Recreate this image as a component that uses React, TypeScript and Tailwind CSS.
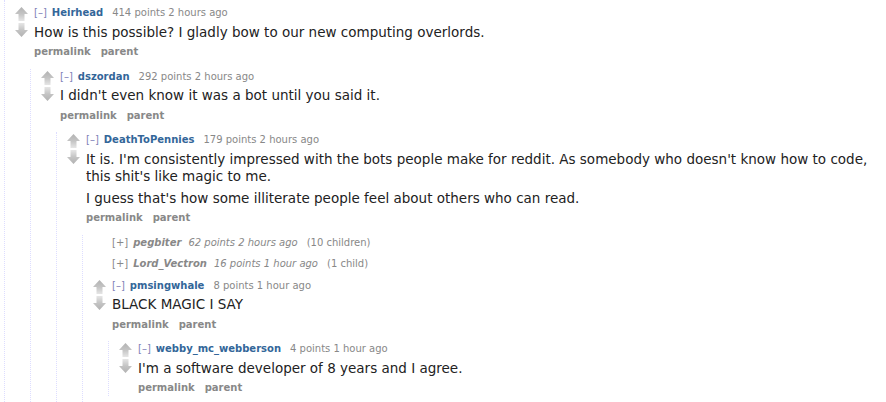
import React from "react";

const FONT = { fontFamily: '"DejaVu Sans", Verdana, sans-serif' };

function UpArrow() {
  return (
    <svg width="13" height="14" viewBox="0 0 13 14" className="block">
      <defs>
        <linearGradient id="ug" x1="0" y1="0" x2="0" y2="1">
          <stop offset="0" stopColor="#b2b2b2" />
          <stop offset="0.5" stopColor="#c4c4c4" />
          <stop offset="1" stopColor="#e6e6e6" />
        </linearGradient>
      </defs>
      <path d="M6.5 0 L13 7 L9.5 7 L9.5 14 L3.5 14 L3.5 7 L0 7 Z" fill="url(#ug)" />
    </svg>
  );
}

function DownArrow() {
  return (
    <svg width="13" height="14" viewBox="0 0 13 14" className="block">
      <defs>
        <linearGradient id="dg" x1="0" y1="0" x2="0" y2="1">
          <stop offset="0" stopColor="#e6e6e6" />
          <stop offset="0.5" stopColor="#c4c4c4" />
          <stop offset="1" stopColor="#b2b2b2" />
        </linearGradient>
      </defs>
      <path d="M3.5 0 L9.5 0 L9.5 7 L13 7 L6.5 14 L0 7 L3.5 7 Z" fill="url(#dg)" />
    </svg>
  );
}

type C = {
  user: string;
  points: string;
  time: string;
  body?: string[];
  collapsed?: boolean;
  childrenLabel?: string;
  children?: C[];
  extend?: boolean;
};

function Comment({ c }: { c: C }) {
  if (c.collapsed) {
    return (
      <div className="flex">
        <div className="ml-[10px] w-[13px] shrink-0" />
        <div className="ml-[6px] text-[10px] leading-[16px] text-[#888] whitespace-nowrap">
          <span>[+]</span>
          <span className="ml-[5px] font-bold italic">{c.user}</span>
          <span className="ml-[7px] italic">
            {c.points} points {c.time}
          </span>
          <span className="ml-[9px]">{c.childrenLabel}</span>
        </div>
      </div>
    );
  }
  return (
    <div>
      <div className="flex">
        <div className="ml-[10px] w-[13px] shrink-0 pt-[2px] flex flex-col gap-[2px]">
          <UpArrow />
          <DownArrow />
        </div>
        <div className="ml-[6px] min-w-0">
          <div className="text-[10px] leading-[16px] whitespace-nowrap">
            <span className="text-[#7f7fb8]">[–]</span>
            <span className="ml-[5px] font-bold text-[#369]">{c.user}</span>
            <span className="ml-[9px] text-[#888]">
              {c.points} points {c.time}
            </span>
          </div>
          <div className="mt-[2.5px] mb-[3.5px] max-w-[800px] text-[13.5px] leading-[17px] text-[#222] flex flex-col gap-[5px]">
            {c.body?.map((p, i) => (
              <p key={i}>{p}</p>
            ))}
          </div>
          <div className="flex gap-[10px] text-[10px] leading-[16px] font-bold text-[#888]">
            <span>permalink</span>
            <span>parent</span>
          </div>
        </div>
      </div>
      {c.children && c.children.length > 0 && (
        <div
          className={
            "ml-[25px] mt-[8.5px] border-l border-dotted border-[#ddf] flex flex-col gap-[5.5px] " +
            (c.extend ? "pb-[20px]" : "")
          }
        >
          {c.children.map((ch, i) => (
            <Comment key={i} c={ch} />
          ))}
        </div>
      )}
    </div>
  );
}

const data: C = {
  user: "Heirhead",
  points: "414",
  time: "2 hours ago",
  body: ["How is this possible? I gladly bow to our new computing overlords."],
  extend: true,
  children: [
    {
      user: "dszordan",
      points: "292",
      time: "2 hours ago",
      body: ["I didn't even know it was a bot until you said it."],
      extend: true,
      children: [
        {
          user: "DeathToPennies",
          points: "179",
          time: "2 hours ago",
          body: [
            "It is. I'm consistently impressed with the bots people make for reddit. As somebody who doesn't know how to code, this shit's like magic to me.",
            "I guess that's how some illiterate people feel about others who can read.",
          ],
          extend: true,
          children: [
            {
              user: "pegbiter",
              points: "62",
              time: "2 hours ago",
              collapsed: true,
              childrenLabel: "(10 children)",
            },
            {
              user: "Lord_Vectron",
              points: "16",
              time: "1 hour ago",
              collapsed: true,
              childrenLabel: "(1 child)",
            },
            {
              user: "pmsingwhale",
              points: "8",
              time: "1 hour ago",
              body: ["BLACK MAGIC I SAY"],
              children: [
                {
                  user: "webby_mc_webberson",
                  points: "4",
                  time: "1 hour ago",
                  body: ["I'm a software developer of 8 years and I agree."],
                },
              ],
            },
          ],
        },
      ],
    },
  ],
};

export default function App() {
  return (
    <div className="w-[886px] h-[402px] overflow-hidden bg-white" style={FONT}>
      <div className="ml-[4px] border-l border-dotted border-[#ddf] pt-[5px] pb-[40px]">
        <Comment c={data} />
      </div>
    </div>
  );
}
